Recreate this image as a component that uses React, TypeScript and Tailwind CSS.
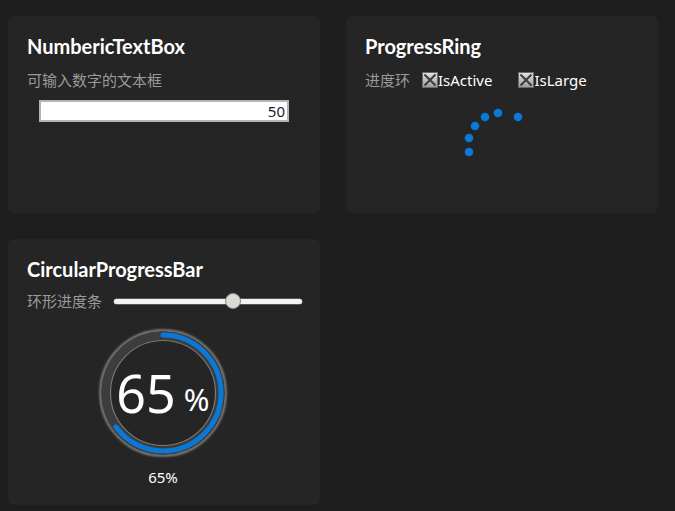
import React from "react";

const font = '"Noto Sans", "Noto Sans CJK SC", sans-serif';
const titleFont = 'Lato, "Noto Sans", sans-serif';

function CheckGlyph() {
  return (
    <svg width="16" height="16" viewBox="0 0 16 16" className="shrink-0">
      <defs>
        <linearGradient id="cg" x1="0" y1="0" x2="0" y2="1">
          <stop offset="0" stopColor="#e4e4e4" />
          <stop offset="1" stopColor="#9a9a9a" />
        </linearGradient>
      </defs>
      <rect x="0.5" y="0.5" width="15" height="15" fill="url(#cg)" stroke="#6a6a6a" />
      <path d="M2.5 2.5 L13.5 13.5 M13.5 2.5 L2.5 13.5" stroke="#3c3c3c" strokeWidth="2" />
    </svg>
  );
}

function Card({ children, h }: { children: React.ReactNode; h: string }) {
  return (
    <div className={`w-[312px] ${h} rounded-[6px] bg-[#252525] pl-[19px] pr-[19px] pt-[18px]`}>{children}</div>
  );
}

function Title({ children }: { children: React.ReactNode }) {
  return (
    <div className="text-[20px] font-bold leading-[24px] text-white" style={{ fontFamily: titleFont }}>
      {children}
    </div>
  );
}

function Ring() {
  const cx = 70;
  const cy = 70;
  const r = 58;
  const c = 2 * Math.PI * r;
  const pct = 0.65;
  return (
    <svg width="140" height="140" viewBox="0 0 140 140">
      <defs>
        <filter id="glow" x="-20%" y="-20%" width="140%" height="140%">
          <feGaussianBlur stdDeviation="1.2" />
        </filter>
      </defs>
      <circle cx={cx} cy={cy} r="62.5" fill="none" stroke="#9a9a9a" strokeWidth="2" filter="url(#glow)" />
      <circle cx={cx} cy={cy} r="57.5" fill="none" stroke="#3d3d3d" strokeWidth="9" />
      <circle cx={cx} cy={cy} r="62.5" fill="none" stroke="#6c6c6c" strokeWidth="1" />
      <circle cx={cx} cy={cy} r="52.5" fill="none" stroke="#7a7a7a" strokeWidth="1.2" />
      <circle
        cx={cx}
        cy={cy}
        r={r}
        fill="none"
        stroke="#0a78d7"
        strokeWidth="5"
        strokeLinecap="round"
        strokeDasharray={`${c * pct} ${c}`}
        transform={`rotate(-90 ${cx} ${cy})`}
      />
    </svg>
  );
}

export default function App() {
  return (
    <div className="min-h-[511px] w-[675px] bg-[#1e1e1e] pl-[8px] pt-[16px]" style={{ fontFamily: font }}>
      <div className="grid grid-cols-[312px_312px] gap-x-[26px] gap-y-[26px]">
        <Card h="h-[197px]">
          <Title>NumbericTextBox</Title>
          <div className="mt-[12px] whitespace-nowrap text-[15px] leading-[20px] text-[#9a9a9a]">可输入数字的文本框</div>
          <div className="ml-[12px] mt-[10px] flex h-[22px] w-[250px] items-center justify-end border-2 border-[#b4b4b4] bg-white pr-[2px] text-[15px] leading-[18px] text-[#1a1a2a]">
            50
          </div>
        </Card>
        <Card h="h-[197px]">
          <Title>ProgressRing</Title>
          <div className="mt-[12px] flex items-center whitespace-nowrap text-[15px] leading-[20px]">
            <span className="text-[#9a9a9a]">进度环</span>
            <span className="ml-[12px] flex items-center text-white">
              <CheckGlyph />
              IsActive
            </span>
            <span className="ml-[26px] flex items-center text-white">
              <CheckGlyph />
              IsLarge
            </span>
          </div>
          <div className="flex justify-center">
            <svg width="80" height="60" viewBox="0 0 80 60" className="ml-[-26px] mt-[11px]">
              {[
                [20, 51],
                [20, 37],
                [26, 25],
                [36, 16],
                [49, 12],
                [69, 16],
              ].map(([x, y], i) => (
                <circle key={i} cx={x} cy={y} r="4.3" fill="#0a78d7" />
              ))}
            </svg>
          </div>
        </Card>
        <Card h="h-[266px]">
          <Title>CircularProgressBar</Title>
          <div className="mt-[10px] flex items-center">
            <span className="shrink-0 whitespace-nowrap text-[15px] leading-[20px] text-[#9a9a9a]">环形进度条</span>
            <div className="relative ml-[12px] flex h-[16px] w-[188px] shrink-0 items-center">
              <div className="h-[5px] w-full rounded-full bg-[#f2f2f0] shadow-[0_0_0_0.5px_#888]" />
              <div className="absolute left-[111px] top-0 h-[16px] w-[16px] rounded-full border border-[#8a8a8a] bg-[#dcdcd6]" />
            </div>
          </div>
          <div className="relative mt-[12px] flex justify-center pr-[2px]">
            <Ring />
            <div className="absolute inset-0 flex items-center justify-center pr-[2px] text-white">
              <span className="text-[52px] font-normal leading-none">65</span>
              <span className="ml-[8px] mt-[12px] text-[31px] leading-none">%</span>
            </div>
          </div>
          <div className="mt-[4px] pr-[2px] text-center text-[15px] leading-[20px] text-white">65%</div>
        </Card>
      </div>
    </div>
  );
}
